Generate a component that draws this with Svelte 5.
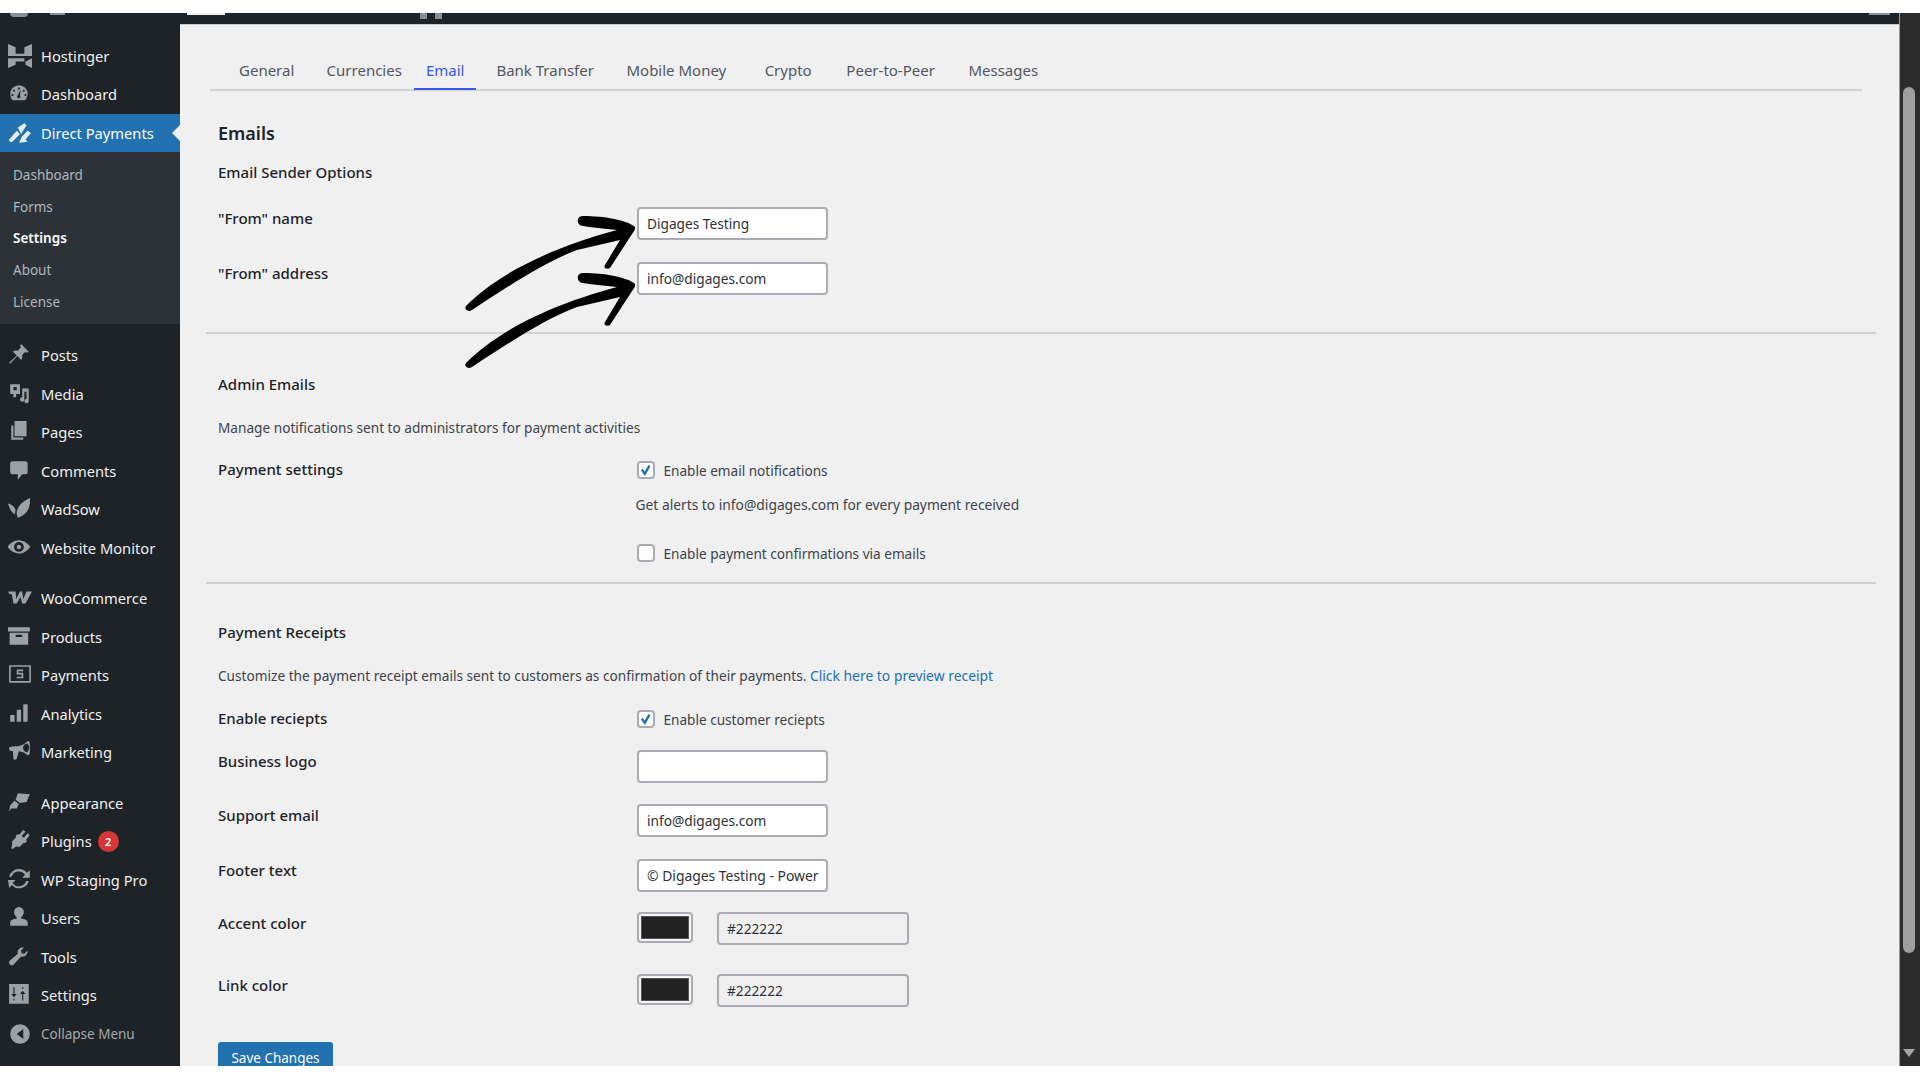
<script>
  const icons = {
    hostinger: 'M0 0l7 3v6h8V3l7-3v11H0zM0 13h15v3H7v3l-7 3zM16 16l6-3v9l-6-3z',
    gauge: 'M10 3a8 8 0 0 0-8 8c0 2.200.9 4.200 2.300 5.700h11.400A8 8 0 0 0 18 11a8 8 0 0 0-8-8zm0 2a1 1 0 1 1 0 2 1 1 0 0 1 0-2zM5.500 7a1 1 0 1 1 0 2 1 1 0 0 1 0-2zm9 0a1 1 0 1 1 0 2 1 1 0 0 1 0-2zM4 11a1 1 0 1 1 0 2 1 1 0 0 1 0-2zm12 0a1 1 0 1 1 0 2 1 1 0 0 1 0-2zM11.500 7l-.5 5.500a1.500 1.500 0 1 1-2-.3z',
    direct: 'M1 17l7-8 3 3-7 7a2 2 0 0 1-3-2zM9 6l6-4 2 2-5 8zM10 20l3-6 5-5 3 2-5 6 2 2z',
    pin: 'M12 1l7 7-2 1-1-1-3 3c.5 2 0 3.500-1 4.500L8.500 12 2 19l-1-1 7-6.500L4.500 8C5.500 7 7 6.500 9 7l3-3-1-1z',
    media: 'M2 2h9v9H7.500v3H5v-3H2zm3 2.500v3h3v-3zM13 6h6v11.500a2 2 0 0 1-4 0 2 2 0 0 1 2-2V9h-2v7a2 2 0 0 1-4 0 2 2 0 0 1 2-2z',
    pages: 'M6 1h11v14H6zM3 5h2v11h9v2H3z',
    comment: 'M4 2h12a2 2 0 0 1 2 2v8a2 2 0 0 1-2 2h-3l-4 5v-5H4a2 2 0 0 1-2-2V4a2 2 0 0 1 2-2z',
    leaf: 'M20 1c1 8-2 15-11 18C6 14 9 6 20 1zM0 6c4 1 6 3 7 6-.5 1.500-.7 3-.5 4C3 14 1 10 0 6z',
    eye: 'M10 4c5 0 8.500 3.500 10.500 6-2 2.500-5.500 6-10.500 6S1.500 12.500-.5 10C1.500 7.500 5 4 10 4zm0 1.500a4.500 4.500 0 1 0 0 9 4.500 4.500 0 0 0 0-9zM10 8a2 2 0 1 1 0 4 2 2 0 0 1 0-4z',
    woo: 'M0 5h7l.5 7L11 5h2l1 7 3-7h5l-6 11h-3l-1.500-6L8 16H5L3.500 7.500H1.500z',
    box: 'M0 2h20v4H0zM1.500 7h17v11h-17zM7 9v2h6V9z',
    payments: 'M1 2h20v16H1zm1.500 1.500v13h17v-13zM8 6h6v1.500H9.500V9H14v5H8v-1.500h4.500V10.500H8z',
    chart: 'M2 12h4v6H2zM8 7h4v11H8zM14 2h4v16h-4z',
    mega: 'M18 1a2 2 0 0 1 2 2v9a2 2 0 0 1-2 2c-2-2.500-5-3.500-8-3.800L8 17c0 1-2.500 1.500-3 .5l-.5-7.500H3a2 2 0 0 1-2-2V7c0-1 5-1 9-1.500 3-.5 6-2 8-4.500zm-.2 2.200a3 3 0 0 0 0 8 6 6 0 0 0 0-8z',
    brush: 'M20 3l-3 7-6 1-4-3 2-6zM6 9l4 3-2 4H3l-2 3 1-6z',
    plug: 'M14 1l2 1.500-3.500 4 2 1.500 3.500-4L20 5.500 16.500 10l1 1-2 2-1-.5-4 4-3-.5-3.500 2.500-1-1 1-4-.5-2 4-4-.5-1 2-2 1 1z',
    sync: 'M10 1c3 0 5.500 1.300 7.300 3.300L20 2v7h-7l2.700-2.700A7 7 0 0 0 3.300 8H1A9 9 0 0 1 10 1zM0 11h7l-2.700 2.700A7 7 0 0 0 16.700 12H19a9 9 0 0 1-15.300 3.700L1 18z',
    user: 'M10 1a4.500 4.500 0 0 1 4.500 5c-.2 2-1.500 3.500-2.500 4.500v1c3 .5 6 1.500 6 3.500v3H2v-3c0-2 3-3 6-3.500v-1C7 9.500 5.700 8 5.500 6A4.500 4.500 0 0 1 10 1z',
    wrench: 'M18 6c0 3-3 5.500-6 4.500L5 18a2.500 2.500 0 0 1-3.500-3.500L9 8c-1-3 1.500-6 5-6l.5.500L12 5l.5 2.500L15 8l2.500-2.500z',
    sliders: 'M1 1h18v18H1zM5 4v6H3l2.500 3L8 10H6V4zm0 10.500V16h1v-1.500zM14 16v-6h2l-2.500-3L11 10h2v6zm0-10.500V4h-1v1.500z'
  };
  const groups = [
    [{ n: 'Hostinger', i: 'hostinger' }, { n: 'Dashboard', i: 'gauge' }, { n: 'Direct Payments', i: 'direct', cur: true }],
    [{ n: 'Posts', i: 'pin' }, { n: 'Media', i: 'media' }, { n: 'Pages', i: 'pages' }, { n: 'Comments', i: 'comment' }, { n: 'WadSow', i: 'leaf' }, { n: 'Website Monitor', i: 'eye' }],
    [{ n: 'WooCommerce', i: 'woo' }, { n: 'Products', i: 'box' }, { n: 'Payments', i: 'payments' }, { n: 'Analytics', i: 'chart' }, { n: 'Marketing', i: 'mega' }],
    [{ n: 'Appearance', i: 'brush' }, { n: 'Plugins', i: 'plug', badge: 2 }, { n: 'WP Staging Pro', i: 'sync' }, { n: 'Users', i: 'user' }, { n: 'Tools', i: 'wrench' }, { n: 'Settings', i: 'sliders' }]
  ];
  const sub = ['Dashboard', 'Forms', 'Settings', 'About', 'License'];
  const tabs = ['General', 'Currencies', 'Email', 'Bank Transfer', 'Mobile Money', 'Crypto', 'Peer-to-Peer', 'Messages'];
  const arrow = 'M27 115C50 92 95 62 177 40C165 39 150 37 143 36C136 35 136 26 143 26C165 26 185 30 194 36C196 37 195 40 194 41L170 78C167 80 163 78 165 75L180 50L137 60C105 72 70 95 32 120C27 123 23 118 27 115Z';
</script>

<div class="page">
  <div class="frame">
    <aside class="side">
      <div class="stub"><span class="stub-a"></span><span class="stub-b"></span></div>
      {#each groups as g, gi}
        <ul class="group" class:last={gi === groups.length - 1}>
          {#each g as item}
            <li class="item" class:cur={item.cur}>
              <svg class="ico" viewBox="0 0 22 22"><path d={icons[item.i]} /></svg>
              <span>{item.n}</span>
              {#if item.badge}<b class="badge">{item.badge}</b>{/if}
            </li>
          {/each}
          {#if gi === 0}
            <li class="submenu">
              {#each sub as s}
                <div class="subitem" class:on={s === 'Settings'}>{s}</div>
              {/each}
            </li>
          {/if}
        </ul>
      {/each}
      <div class="item collapse">
        <svg class="ico" viewBox="0 0 22 22"><path d="M11 2a9 9 0 1 1 0 18 9 9 0 0 1 0-18zm3 4.500L8 11l6 4.500z" /></svg>
        <span>Collapse Menu</span>
      </div>
    </aside>

    <div class="right">
      <div class="topbar">
        <span class="tb-white"></span><span class="tb-tick one"></span><span class="tb-tick"></span><span class="mark"></span>
      </div>
      <main class="main">
        <nav class="tabs">
          {#each tabs as t}
            <span class="tab" class:active={t === 'Email'}>{t}</span>
          {/each}
        </nav>

        <section class="sec">
          <h1>Emails</h1>
          <h2 class="sender">Email Sender Options</h2>
          <div class="row r-from"><label>"From" name</label><div class="field">Digages Testing</div></div>
          <div class="row r-addr"><label>"From" address</label><div class="field">info@digages.com</div></div>
        </section>
        <hr />

        <section class="sec">
          <h2 class="admin">Admin Emails</h2>
          <p class="desc">Manage notifications sent to administrators for payment activities</p>
          <div class="row r-pay">
            <label>Payment settings</label>
            <div class="stack">
              <div class="check-line"><span class="cb"><svg viewBox="0 0 18 18"><path d="M3.500 9l2-2L8 10.500 12.500 2.500 15 4 8.300 15.500z" /></svg></span>Enable email notifications</div>
              <p class="hint">Get alerts to info@digages.com for every payment received</p>
              <div class="check-line"><span class="cb"></span>Enable payment confirmations via emails</div>
            </div>
          </div>
        </section>
        <hr class="hr-two" />

        <section class="sec">
          <h2 class="receipts">Payment Receipts</h2>
          <p class="desc">Customize the payment receipt emails sent to customers as confirmation of their payments. <a href="#preview">Click here to preview receipt</a></p>
          <div class="row r-en"><label>Enable reciepts</label><div class="check-line nudge"><span class="cb"><svg viewBox="0 0 18 18"><path d="M3.500 9l2-2L8 10.500 12.500 2.500 15 4 8.300 15.500z" /></svg></span>Enable customer reciepts</div></div>
          <div class="row r-logo"><label>Business logo</label><div class="field"></div></div>
          <div class="row r-sup"><label>Support email</label><div class="field">info@digages.com</div></div>
          <div class="row r-foot"><label>Footer text</label><div class="field wide-text">© Digages Testing - Power</div></div>
          <div class="row r-acc"><label>Accent color</label><div class="colors"><span class="swatch"><i></i></span><div class="field hex">#222222</div></div></div>
          <div class="row r-link"><label>Link color</label><div class="colors"><span class="swatch"><i></i></span><div class="field hex">#222222</div></div></div>
          <button class="save">Save Changes</button>
        </section>

        <svg class="arrows" viewBox="0 0 220 190" aria-hidden="true">
          <path d={arrow} />
          <path d={arrow} transform="translate(0 57)" />
        </svg>
      </main>
    </div>
    <div class="scroll"><span class="thumb"></span><span class="down"></span></div>
  </div>
</div>

<style>
  :global(body) { margin: 0; background: #fff; }
  .page { width: 1920px; height: 1080px; padding-top: 13px; box-sizing: border-box; font-family: "Noto Sans", "Open Sans", sans-serif; overflow: hidden; }
  .frame { display: flex; height: 1053px; overflow: hidden; }

  .side { width: 180px; flex: none; background: #1d2327; color: #f0f0f1; font-size: 14.700px; }
  .stub { height: 23.500px; display: flex; align-items: flex-start; padding-left: 10px; box-sizing: border-box; }
  .stub-a { display: block; width: 18px; height: 4px; background: #8c8f94; border-radius: 0 0 9px 9px; }
  .stub-b { display: block; width: 15px; height: 2px; background: #8c8f94; margin-left: 22px; }
  .group { list-style: none; margin: 0 0 12px; padding: 0; }
  .group.last { margin-bottom: 0; }
  .item { height: 38.500px; display: flex; align-items: center; padding-left: 8px; box-sizing: border-box; position: relative; }
  .item span { white-space: nowrap; }
  .ico { width: 24px; height: 24px; margin-right: 9px; flex: none; fill: #9ca1a7; }
  .cur { background: #2271b1; color: #fff; }
  .cur .ico { fill: #e8edf2; }
  .cur::after { content: ""; position: absolute; right: 0; top: 50%; margin-top: -8px; border: 8px solid transparent; border-right-color: #f0f0f1; border-left: 0; }
  .submenu { background: #2c3338; height: 172px; padding-top: 8px; box-sizing: border-box; }
  .subitem { height: 31.700px; line-height: 31.700px; padding-left: 13px; font-size: 13.500px; color: #b3b6ba; }
  .subitem.on { color: #fff; font-weight: 600; }
  .badge { display: inline-flex; align-items: center; justify-content: center; width: 21px; height: 21px; border-radius: 50%; background: #d63638; color: #fff; font-size: 11px; font-weight: 600; margin-left: 6px; }
  .collapse { color: #a7aaad; font-size: 13.500px; }

  .right { flex: 1; min-width: 0; display: flex; flex-direction: column; }
  .topbar { height: 11px; background: #1d2327; flex: none; display: flex; align-items: flex-start; }
  .tb-white { width: 38px; height: 2px; margin-left: 7px; background: #f0f0f1; }
  .tb-tick { width: 7px; height: 6px; margin-left: 8px; background: #8c8f94; }
  .tb-tick.one { margin-left: 195px; }
  .mark { width: 21px; height: 2px; background: #8c8f94; margin-left: auto; margin-right: 9px; }
  .main { flex: 1; min-height: 0; position: relative; background: #f0f0f1; overflow: hidden; border-top: 1px solid #c9cacb; box-sizing: border-box; color: #2c3338; }

  .tabs { display: flex; align-items: flex-start; margin: 0 37px 0 30px; padding: 29px 0 0 17px; height: 66px; box-sizing: border-box; border-bottom: 2px solid #d0d1d2; font-size: 15px; line-height: 32px; }
  .tab { padding: 0 12px; margin-right: 9.500px; height: 36px; color: #50575e; white-space: nowrap; box-sizing: border-box; flex: none; }
  .tab:nth-child(1) { margin-right: 8.300px; }
  .tab:nth-child(2) { margin-right: 0; }
  .tab:nth-child(3) { margin-right: 8px; }
  .tab:nth-child(4) { margin-right: 8.500px; }
  .tab:nth-child(5) { margin-right: 14.400px; }
  .tab:nth-child(6) { margin-right: 10.700px; }
  .active { color: #3858e9; border-bottom: 2px solid #3858e9; }

  .sec { padding: 0 38px; }
  h1 { margin: 0; padding-top: 28px; font-size: 18px; line-height: 28px; font-weight: 600; color: #1d2327; }
  h2 { margin: 0; font-size: 15px; line-height: 22px; font-weight: 500; color: #1d2327; }
  .sender { margin-top: 14px; }
  .admin { margin-top: 39px; }
  .receipts { margin-top: 37px; }
  .desc { margin: 23px 0 0; font-size: 13.650px; line-height: 20px; color: #3c434a; }
  .desc a { color: #2271b1; text-decoration: none; font-size: 13.900px; }

  .row { display: grid; grid-template-columns: 418.500px 1fr; align-items: start; }
  .row label { font-size: 15px; line-height: 22px; font-weight: 500; color: #1d2327; }
  .field { width: 191px; height: 33px; background: #fff; border: 2px solid #a9acb3; border-radius: 4px; box-sizing: border-box; font-size: 13.700px; line-height: 29px; padding-left: 8.500px; color: #2c3338; white-space: nowrap; overflow: hidden; }
  .wide-text { font-size: 13.900px; }
  .r-from { margin-top: 24px; height: 54.500px; }
  .r-addr { height: 70.500px; }

  hr { border: 0; height: 2px; background: #d0d1d2; margin: 0 23px 0 26px; }
  .hr-two { margin-top: 19px; }

  .r-pay { margin-top: 20px; }
  .stack { display: flex; flex-direction: column; padding-top: 2px; }
  .check-line { display: flex; align-items: center; height: 20px; font-size: 13.600px; color: #3c434a; white-space: nowrap; }
  .nudge { margin-top: 2px; }
  .cb { width: 18px; height: 18px; flex: none; margin-right: 9px; background: #fff; border: 2px solid #a9acb3; border-radius: 4px; box-sizing: border-box; display: flex; align-items: center; justify-content: center; }
  .cb svg { width: 15px; height: 15px; fill: #2271b1; flex: none; }
  .hint { margin: 15px 0 28px -1px; font-size: 13.800px; line-height: 20px; color: #3c434a; }

  .r-en { margin-top: 21px; height: 43px; }
  .r-logo { height: 54px; }
  .r-sup { height: 55px; }
  .r-foot { height: 53px; }
  .r-acc { height: 62px; }
  .r-link { height: 68px; }
  .colors { display: flex; align-items: flex-start; gap: 24px; }
  .swatch { width: 56px; height: 31px; border: 2px solid #a9acb3; border-radius: 4px; box-sizing: border-box; padding: 2px; display: block; background: #f6f6f7; }
  .swatch i { display: block; height: 100%; background: #222; border: 1px solid #555; box-sizing: border-box; }
  .hex { width: 192px; background: transparent; }
  .save { display: block; width: 115px; height: 32px; padding: 0; border: 0; border-radius: 3px; background: #2271b1; color: #fff; font: inherit; font-size: 13.500px; }

  .arrows { position: absolute; left: 260px; top: 165px; width: 220px; height: 190px; fill: #000; pointer-events: none; }

  .scroll { width: 21px; flex: none; background: #2c2c2c; position: relative; border-left: 1px solid #9a9a9a; box-sizing: border-box; }
  .thumb { position: absolute; left: 3px; top: 74px; width: 12px; height: 866px; background: #9f9f9f; border-radius: 6px; }
  .down { position: absolute; left: 3px; bottom: 9px; border-style: solid; border-width: 8px 6.500px 0; border-color: #a5a5a5 transparent transparent; }
</style>
